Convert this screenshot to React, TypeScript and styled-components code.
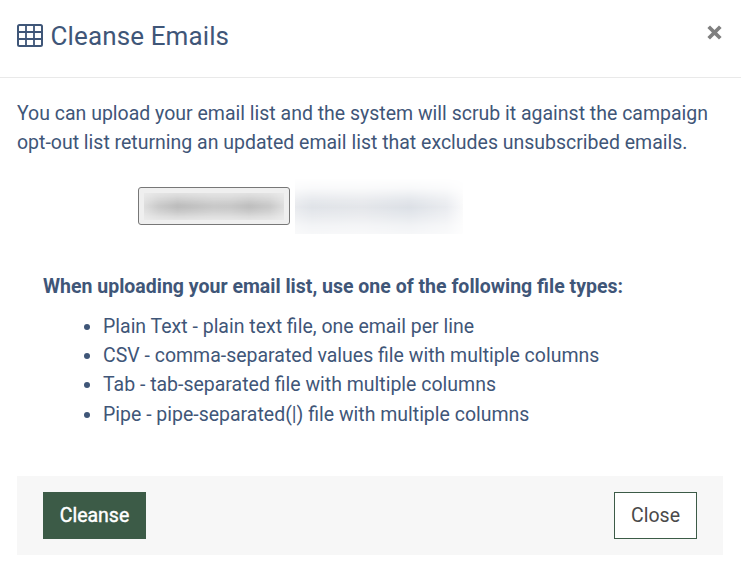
import React from 'react';
import styled, { createGlobalStyle } from 'styled-components';

const GlobalStyle = createGlobalStyle`
  * { box-sizing: border-box; }
  body { margin: 0; background: #fff; color: #3f5678; font-family: Roboto, sans-serif; font-size: 19.49px; line-height: 29.25px; }
`;
const Modal = styled.div`width: 741px; height: 569px; display: flex; flex-direction: column; overflow: hidden;`;
const Header = styled.header`
  height: 78px; flex: none; display: flex; align-items: flex-start; justify-content: space-between;
  padding: 20px 18px 0 17px; border-bottom: 1px solid #e9e9e9;
`;
const Title = styled.h1`
  margin: 0; display: flex; align-items: center; gap: 7.5px; font-size: 26px; line-height: 32px; font-weight: 400; letter-spacing: 0.12px;
`;
const Dismiss = styled.button`border: 0; padding: 0; margin-top: 4px; background: none; width: 17px; height: 17px; display: flex;`;
const Body = styled.main`padding: 21px 17px 0; flex: 1;`;
const Intro = styled.p`margin: 0; white-space: nowrap;`;
const Picker = styled.div`height: 56px; margin: 20px 0 0 121px; display: flex; align-items: center; gap: 5px;`;
const ChooseFile = styled.div`
  width: 152px; height: 38px; border: 1px solid #777; border-radius: 3px; background: #efefef; padding: 5px;
`;
const ChooseBlur = styled.div`
  height: 27px;
  background: linear-gradient(90deg, #dedede, #cbcbcb 10%, #bdbdbd 24%, #c9c9c9 50%, #c8c8c8 62%, #bfbfbf 75%, #cacaca 90%, #dedede);
  mask-image: linear-gradient(#0004, #0007 14%, #000c 32%, #000 45%, #000 55%, #000b 72%, #0006 88%, #0003);
`;
const FileName = styled.div`
  width: 168px; height: 56px;
  background: linear-gradient(90deg, #e8eaee, #e0e3e8 10%, #e4e6ea 40%, #dce0e6 68%, #e9ebef 90%, #f5f6f8 97%, #fafafa);
  mask-image: linear-gradient(transparent, #0003 18%, #000c 40%, #000 52%, #000b 68%, #0006 85%, #0004);
`;
const Types = styled.section`margin: 38px 26px 0;`;
const TypesTitle = styled.h2`margin: 0; font-size: 19.5px; line-height: 29.25px; font-weight: 700; white-space: nowrap;`;
const List = styled.ul`margin: 11px 0 0; padding-left: 60px;`;
const Footer = styled.footer`
  height: 79px; margin: 0 18px 14px 17px; padding: 0 26px; background: #f7f7f7; display: flex; align-items: center; justify-content: space-between;
`;
const Action = styled.button<{ $primary?: boolean }>`
  width: ${p => (p.$primary ? 103 : 83)}px; height: 47px; padding: 0; border: 1px solid #3c5b47;
  background: ${p => (p.$primary ? '#3c5b47' : '#fff')}; color: ${p => (p.$primary ? '#fff' : '#4a4a4a')};
  font: 400 19.5px Roboto, sans-serif;
  -webkit-text-stroke: ${p => (p.$primary ? '0.4px #fff' : '0')};
`;

const fileTypes = [
  'Plain Text - plain text file, one email per line',
  'CSV - comma-separated values file with multiple columns',
  'Tab - tab-separated file with multiple columns',
  'Pipe - pipe-separated(|) file with multiple columns',
];

export default function App() {
  return (
    <Modal>
      <GlobalStyle />
      <Header>
        <Title>
          <svg width="26" height="24" viewBox="0 0 26 24" fill="none" stroke="currentColor" strokeWidth="2">
            <rect x="1" y="1" width="24" height="21" rx="1.5" />
            <path d="M1 8h24M1 15h24" />
            <path d="M9 1v21M17 1v21" strokeWidth="1.8" />
          </svg>
          Cleanse Emails
        </Title>
        <Dismiss aria-label="Close dialog">
          <svg width="17" height="17" viewBox="0 0 17 17" stroke="#7f7f7f" strokeWidth="3.7">
            <path d="M2.7 2.7l11.6 11.6M14.3 2.7L2.7 14.3" />
          </svg>
        </Dismiss>
      </Header>
      <Body>
        <Intro>
          You can upload your email list and the system will scrub it against the campaign<br />
          opt-out list returning an updated email list that excludes unsubscribed emails.
        </Intro>
        <Picker>
          <ChooseFile><ChooseBlur /></ChooseFile>
          <FileName />
        </Picker>
        <Types>
          <TypesTitle>When uploading your email list, use one of the following file types:</TypesTitle>
          <List>{fileTypes.map(t => <li key={t}>{t}</li>)}</List>
        </Types>
      </Body>
      <Footer>
        <Action $primary>Cleanse</Action>
        <Action>Close</Action>
      </Footer>
    </Modal>
  );
}
